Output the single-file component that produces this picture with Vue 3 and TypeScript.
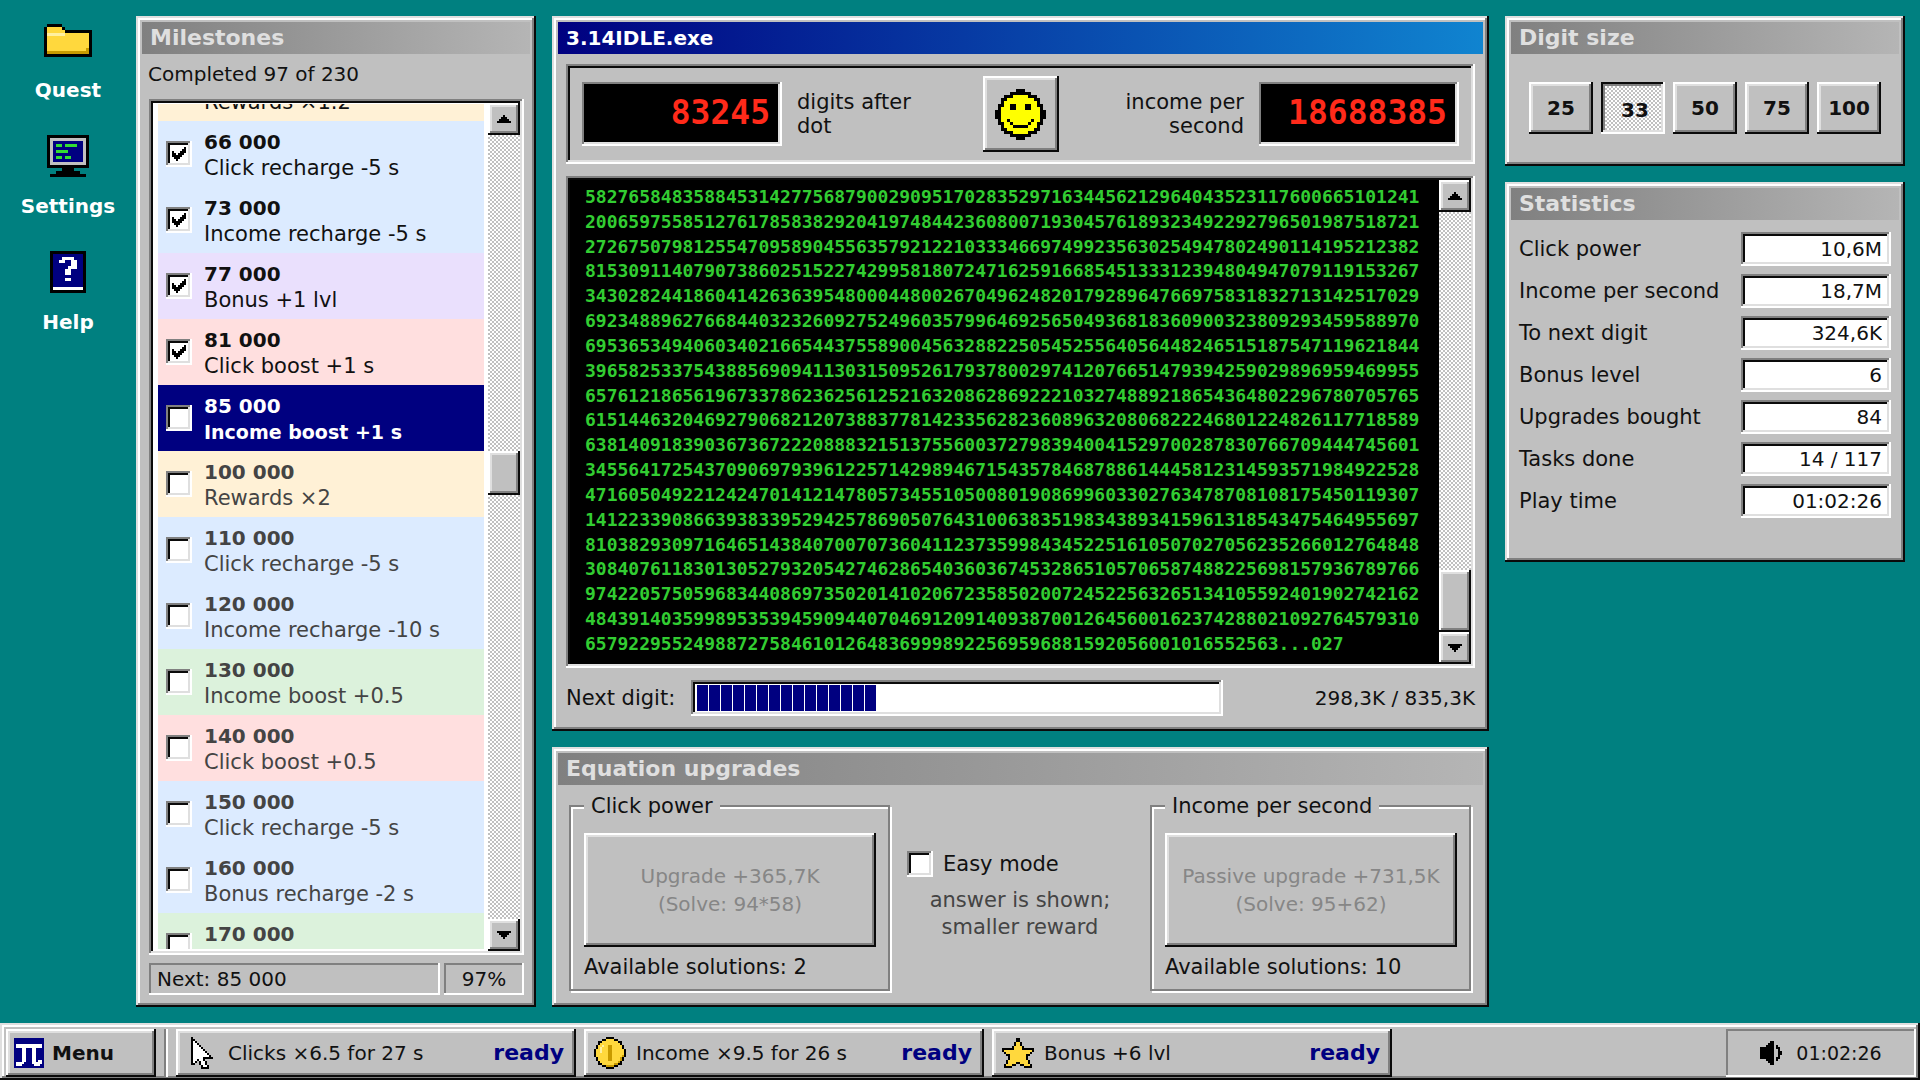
<script setup lang="ts">
import { h, nextTick, onMounted, ref } from 'vue'
import type { FunctionalComponent } from 'vue'

const palette: Record<string, string> = {
  k: '#000000',
  w: '#ffffff',
  y: '#ffd83d',
  l: '#fff0a0',
  d: '#c89a00',
  c: '#c0c0c0',
  n: '#000080',
  g: '#33dd33',
  s: '#ffff00',
}

/* Draws a bitmap icon: one letter of the palette per cell, "." is empty. */
const PixelIcon: FunctionalComponent<{ rows: string[]; scale?: number }> = (props) => {
  const scale = props.scale ?? 3
  const cols = Math.max(...props.rows.map((r) => r.length))
  const cells = props.rows.flatMap((row, y) =>
    [...(row.match(/(.)\1*/g) ?? [])].reduce<{ x: number; out: ReturnType<typeof h>[] }>(
      (acc, run) => {
        if (run[0] !== '.') {
          acc.out.push(h('rect', { x: acc.x, y, width: run.length, height: 1, fill: palette[run[0]] }))
        }
        acc.x += run.length
        return acc
      },
      { x: 0, out: [] },
    ).out,
  )
  return h(
    'svg',
    {
      width: cols * scale,
      height: props.rows.length * scale,
      viewBox: `0 0 ${cols} ${props.rows.length}`,
      'shape-rendering': 'crispEdges',
      'aria-hidden': 'true',
    },
    cells,
  )
}
PixelIcon.props = ['rows', 'scale']

const folder = [
  '.kkkkk..........',
  'kyyyyyk.........',
  'kyyyyyykkkkkkkkk',
  'kllllllyyyyyyyyk',
  'kyyyyyyyyyyyyyyk',
  'kyyyyyyyyyyyyyyk',
  'kyyyyyyyyyyyyyyk',
  'kyyyyyyyyyyyyyyk',
  'kyyyyyyyyyyyyydk',
  'kddddddddddddddk',
  'kkkkkkkkkkkkkkkk',
]
const monitor = [
  'kkkkkkkkkkkkkk',
  'kcccccccccccck',
  'kcnnnnnnnnnnck',
  'kcnggnggggnnck',
  'kcnnnnnnnnnnck',
  'kcnggggnnnnnck',
  'kcnnnnnnnnnnck',
  'kcnggnggnnnnck',
  'kcnnnnnnnnnnck',
  'kcccccccccccck',
  'kkkkkkkkkkkkkk',
  '.....kkkk.....',
  '...kkkkkkkk...',
  '.kkkkkkkkkkkk.',
]
const help = [
  'kkkkkkkkkkkk',
  'knnnnnnnnnnk',
  'knnnwwwwnnnk',
  'knnwwnnwwnnk',
  'knnnnnnwwnnk',
  'knnnnnwwwnnk',
  'knnnnwwnnnnk',
  'knnnnwwnnnnk',
  'knnnnnnnnnnk',
  'knnnnwwnnnnk',
  'knnnnnnnnnnk',
  'knnnnnnnnnnk',
  'kwwwwwwwwwwk',
  'kkkkkkkkkkkk',
]
const smiley = [
  '.......kkk.......',
  '.....kkkkkkk.....',
  '...kkkssssskkk...',
  '..kkssssssssskk..',
  '..ksssssssssssk..',
  '.kksskkssskksskk.',
  '.kssskkssskksssk.',
  'kkssssssssssssskk',
  'kkssssssssssssskk',
  'kkssssssssssssskk',
  '.ksskssssssskssk.',
  '.kkssksssssksskk.',
  '..kssskkkkksssk..',
  '..kkssssssssskk..',
  '...kkkssssskkk...',
  '.....kkkkkkk.....',
  '.......kkk.......',
]
const tick = ['......k', '.....kk', 'k...kkk', 'kk.kkk.', 'kkkkk..', '.kkk...', '..k....']
const arrowUp = ['...k...', '..kkk..', '.kkkkk.', 'kkkkkkk']
const arrowDown = ['kkkkkkk', '.kkkkk.', '..kkk..', '...k...']
const cursor = [
  'k..........',
  'kk.........',
  'kwk........',
  'kwwk.......',
  'kwwwk......',
  'kwwwwk.....',
  'kwwwwwk....',
  'kwwwwwwk...',
  'kwwwwwwwk..',
  'kwwwwwwwwk.',
  'kwwwwwkkkkk',
  'kwwkwwk....',
  'kwk.kwwk...',
  'kk..kwwk...',
  '.....kwwk..',
  '.....kkkk..',
]
const coin = [
  '......kkkk......',
  '....kkyyyykk....',
  '..kkyyyyyyyykk..',
  '..kyyyyyyyyyyk..',
  '.kyylyyddyyyyyk.',
  '.kylyyyddyyyyyk.',
  'kyylyyyddyyyyyyk',
  'kyylyyyddyyyyyyk',
  'kyyyyyyddyyyyyyk',
  'kyyyyyyddyyyyydk',
  '.kyyyyyddyyyydk.',
  '.kyyyyyddyyyydk.',
  '..kyyyyyyyyydk..',
  '..kkyyyyyyddkk..',
  '....kkddddkk....',
  '......kkkk......',
]
const star = [
  '.......kk.......',
  '.......kk.......',
  '......kyyk......',
  '......kyyk......',
  '.....kyyyyk.....',
  'kkkkkkyyyykkkkkk',
  'kyyyyyyyyyyyyyyk',
  '.kyyyyyyyyyyyyk.',
  '..kkyyyyyyyykk..',
  '...kyyyyyyyyk...',
  '...kyyyyyyyyk...',
  '..kyyyyyyyyyyk..',
  '..kyyyykkyyyyk..',
  '.kyyykk..kkyyyk.',
  '.kkkk......kkkk.',
]
const speaker = [
  '.....kk....',
  '....kkk....',
  '...kkkk.k..',
  'kkkkkkk.kk.',
  'kkkkkkk..k.',
  'kkkkkkk..kk',
  'kkkkkkk..kk',
  'kkkkkkk..k.',
  'kkkkkkk.kk.',
  '...kkkk.k..',
  '....kkk....',
  '.....kk....',
]
const pi = [
  'nnnnnnnnnnnnnnn',
  'nnnnnnnnnnnnnnn',
  'nnnnnnnnnnnnnnn',
  'nwwwwwwwwwwwwwn',
  'nwwwwwwwwwwwwwn',
  'nnnnwwnnnwwnnnn',
  'nnnnwwnnnwwnnnn',
  'nnnnwwnnnwwnnnn',
  'nnnnwwnnnwwnnnn',
  'nnnnwwnnnwwnnnn',
  'nnnnwwnnnwwnnnn',
  'nnnnwwnnnwwnwwn',
  'nwwwwnnnnwwwwwn',
  'nwwwnnnnnnwwwnn',
  'nnnnnnnnnnnnnnn',
]

const shortcuts = [
  { label: 'Quest', icon: folder },
  { label: 'Settings', icon: monitor },
  { label: 'Help', icon: help },
]

interface Milestone {
  at: string
  reward: string
  tone: string
  state: 'done' | 'next' | 'locked'
}
const milestones: Milestone[] = [
  { at: '', reward: 'Rewards ×1.2', tone: 'amber', state: 'done' },
  { at: '66 000', reward: 'Click recharge -5 s', tone: 'blue', state: 'done' },
  { at: '73 000', reward: 'Income recharge -5 s', tone: 'blue', state: 'done' },
  { at: '77 000', reward: 'Bonus +1 lvl', tone: 'violet', state: 'done' },
  { at: '81 000', reward: 'Click boost +1 s', tone: 'red', state: 'done' },
  { at: '85 000', reward: 'Income boost +1 s', tone: 'navy', state: 'next' },
  { at: '100 000', reward: 'Rewards ×2', tone: 'amber', state: 'locked' },
  { at: '110 000', reward: 'Click recharge -5 s', tone: 'blue', state: 'locked' },
  { at: '120 000', reward: 'Income recharge -10 s', tone: 'blue', state: 'locked' },
  { at: '130 000', reward: 'Income boost +0.5', tone: 'green', state: 'locked' },
  { at: '140 000', reward: 'Click boost +0.5', tone: 'red', state: 'locked' },
  { at: '150 000', reward: 'Click recharge -5 s', tone: 'blue', state: 'locked' },
  { at: '160 000', reward: 'Bonus recharge -2 s', tone: 'blue', state: 'locked' },
  { at: '170 000', reward: '', tone: 'green', state: 'locked' },
]

const digitRows = [
  '58276584835884531427756879002909517028352971634456212964043523117600665101241',
  '20065975585127617858382920419748442360800719304576189323492292796501987518721',
  '27267507981255470958904556357921221033346697499235630254947802490114195212382',
  '81530911407907386025152274299581807247162591668545133312394804947079119153267',
  '34302824418604142636395480004480026704962482017928964766975831832713142517029',
  '69234889627668440323260927524960357996469256504936818360900323809293459588970',
  '69536534940603402166544375589004563288225054525564056448246515187547119621844',
  '39658253375438856909411303150952617937800297412076651479394259029896959469955',
  '65761218656196733786236256125216320862869222103274889218654364802296780705765',
  '61514463204692790682120738837781423356282360896320806822246801224826117718589',
  '63814091839036736722208883215137556003727983940041529700287830766709444745601',
  '34556417254370906979396122571429894671543578468788614445812314593571984922528',
  '47160504922124247014121478057345510500801908699603302763478708108175450119307',
  '14122339086639383395294257869050764310063835198343893415961318543475464955697',
  '81038293097164651438407007073604112373599843452251610507027056235266012764848',
  '30840761183013052793205427462865403603674532865105706587488225698157936789766',
  '97422057505968344086973502014102067235850200724522563265134105592401902742162',
  '48439140359989535394590944070469120914093870012645600162374288021092764579310',
  '6579229552498872758461012648369998922569596881592056001016552563...027',
]

const sizes = [25, 33, 50, 75, 100]
const activeSize = ref(33)
const easyMode = ref(false)

const stats = [
  { id: 'click', label: 'Click power', value: '10,6M' },
  { id: 'income', label: 'Income per second', value: '18,7M' },
  { id: 'next', label: 'To next digit', value: '324,6K' },
  { id: 'bonus', label: 'Bonus level', value: '6' },
  { id: 'upgrades', label: 'Upgrades bought', value: '84' },
  { id: 'tasks', label: 'Tasks done', value: '14 / 117' },
  { id: 'time', label: 'Play time', value: '01:02:26' },
]

const boosts = [
  { label: 'Clicks ×6.5 for 27 s', icon: cursor },
  { label: 'Income ×9.5 for 26 s', icon: coin },
  { label: 'Bonus +6 lvl', icon: star },
]

const list = ref<HTMLElement | null>(null)
onMounted(async () => {
  await nextTick()
  if (list.value) list.value.scrollTop = 49
})
</script>

<template>
  <div class="desktop">
    <main class="screen">
      <nav class="shortcuts">
        <button v-for="s in shortcuts" :key="s.label" type="button" class="shortcut">
          <span class="shortcut-icon"><PixelIcon :rows="s.icon" /></span>
          <span>{{ s.label }}</span>
        </button>
      </nav>

      <section class="window milestones">
        <h2 class="title">Milestones</h2>
        <p class="completed">Completed 97 of 230</p>
        <div class="list-box sunken">
          <ul ref="list" class="list">
            <li v-for="m in milestones" :key="m.at" :class="['row', m.tone, m.state]">
              <label class="row-label">
                <span class="check">
                  <input type="checkbox" :checked="m.state === 'done'" />
                  <PixelIcon v-if="m.state === 'done'" class="tick" :rows="tick" :scale="2" />
                </span>
                <span class="row-text">
                  <b>{{ m.at }}</b>
                  <span>{{ m.reward }}</span>
                </span>
              </label>
            </li>
          </ul>
          <div class="scrollbar">
            <button type="button" class="scroll-btn" aria-label="Scroll up"><PixelIcon :rows="arrowUp" :scale="2" /></button>
            <div class="track-before"></div>
            <div class="thumb"></div>
            <div class="track-after"></div>
            <button type="button" class="scroll-btn" aria-label="Scroll down"><PixelIcon :rows="arrowDown" :scale="2" /></button>
          </div>
        </div>
        <footer class="status">
          <span class="status-field">Next: 85 000</span>
          <span class="status-field percent">97%</span>
        </footer>
      </section>

      <div class="center">
        <section class="window game">
          <h1 class="title active">3.14IDLE.exe</h1>
          <div class="panel sunken">
            <output class="led">83245</output>
            <span class="led-label">digits after dot</span>
            <button type="button" class="face" aria-label="Click"><PixelIcon :rows="smiley" /></button>
            <span class="led-label right">income per second</span>
            <output class="led">18688385</output>
          </div>
          <div class="digits-box sunken">
            <div class="digits">
              <div v-for="(row, i) in digitRows" :key="i">{{ row }}</div>
            </div>
            <div class="scrollbar">
              <button type="button" class="scroll-btn" aria-label="Scroll up"><PixelIcon :rows="arrowUp" :scale="2" /></button>
              <div class="track-after"></div>
              <div class="thumb large"></div>
              <button type="button" class="scroll-btn" aria-label="Scroll down"><PixelIcon :rows="arrowDown" :scale="2" /></button>
            </div>
          </div>
          <div class="progress-row">
            <span>Next digit:</span>
            <div class="progress sunken" role="progressbar" aria-valuenow="298" aria-valuemin="0" aria-valuemax="835">
              <i v-for="n in 15" :key="n" class="segment"></i>
            </div>
            <span class="progress-value">298,3K / 835,3K</span>
          </div>
        </section>

        <section class="window upgrades">
          <h2 class="title">Equation upgrades</h2>
          <div class="upgrade-row">
            <fieldset class="group">
              <legend>Click power</legend>
              <button type="button" class="upgrade" disabled>Upgrade +365,7K<br />(Solve: 94*58)</button>
              <p class="available">Available solutions: 2</p>
            </fieldset>
            <div class="easy">
              <label class="easy-label">
                <span class="check"><input v-model="easyMode" type="checkbox" /></span>
                Easy mode
              </label>
              <p class="hint">answer is shown;<br />smaller reward</p>
            </div>
            <fieldset class="group">
              <legend>Income per second</legend>
              <button type="button" class="upgrade" disabled>Passive upgrade +731,5K<br />(Solve: 95+62)</button>
              <p class="available">Available solutions: 10</p>
            </fieldset>
          </div>
        </section>
      </div>

      <div class="side">
        <section class="window sizes-window">
          <h2 class="title">Digit size</h2>
          <div class="sizes">
            <button
              v-for="s in sizes"
              :key="s"
              type="button"
              :class="['size', { pressed: s === activeSize }]"
              @click="activeSize = s"
            >{{ s }}</button>
          </div>
        </section>
        <section class="window stats-window">
          <h2 class="title">Statistics</h2>
          <div class="stats">
            <div v-for="s in stats" :key="s.id" class="stat">
              <label :for="s.id">{{ s.label }}</label>
              <input :id="s.id" type="text" class="sunken" readonly :value="s.value" />
            </div>
          </div>
        </section>
      </div>
    </main>

    <footer class="taskbar">
      <button type="button" class="menu"><PixelIcon :rows="pi" :scale="2" />Menu</button>
      <span class="divider"></span>
      <button v-for="b in boosts" :key="b.label" type="button" class="boost">
        <span class="boost-icon"><PixelIcon :rows="b.icon" :scale="2" /></span>
        <span class="boost-name">{{ b.label }}</span>
        <b class="ready">ready</b>
      </button>
      <div class="tray">
        <PixelIcon :rows="speaker" :scale="2" />
        <time>01:02:26</time>
      </div>
    </footer>
  </div>
</template>

<style>
body {
  margin: 0;
  background: #008080;
}
</style>

<style scoped>
.desktop {
  display: flex;
  flex-direction: column;
  height: 100vh;
  background: #008080;
  color: #111;
  font: 21px/24px "DejaVu Sans", sans-serif;
}
.desktop * {
  box-sizing: border-box;
}
button,
input {
  margin: 0;
  padding: 0;
  border: 0;
  border-radius: 0;
  font: inherit;
  font-size: 20px;
  color: inherit;
}
b {
  font-size: 20px;
}
h1,
h2,
p,
ul {
  margin: 0;
  padding: 0;
}
svg {
  display: block;
  flex: none;
}

.screen {
  flex: 1;
  min-height: 0;
  display: grid;
  grid-template-columns: 136px 400px 1fr 416px;
  padding: 16px 15px 16px 0;
}
.center,
.side {
  display: flex;
  flex-direction: column;
  gap: 16px;
  min-width: 0;
  min-height: 0;
  margin-left: 16px;
}

/* Bevels */
.window,
.taskbar {
  background: #c0c0c0;
  box-shadow:
    inset -2px -2px #0a0a0a,
    inset 2px 2px #dfdfdf,
    inset -4px -4px #808080,
    inset 4px 4px #fff;
}
.sunken,
.check input {
  box-shadow:
    inset -2px -2px #fff,
    inset 2px 2px #808080,
    inset -4px -4px #dfdfdf,
    inset 4px 4px #0a0a0a;
}
.scroll-btn,
.thumb,
.face,
.upgrade,
.size,
.menu,
.boost {
  background: #c0c0c0;
  box-shadow:
    inset -2px -2px #0a0a0a,
    inset 2px 2px #fff,
    inset -4px -4px #808080,
    inset 4px 4px #dfdfdf;
}

.window {
  display: flex;
  flex-direction: column;
  padding: 6px;
}
.title {
  flex: none;
  height: 32px;
  padding: 0 8px;
  background: linear-gradient(90deg, #808080, #b5b5b5);
  color: #dfdfdf;
  font-size: 22px;
  line-height: 32px;
  font-weight: bold;
}
.title.active {
  background: linear-gradient(90deg, #000080, #1084d0);
  color: #fff;
  font-size: 20px;
}

/* Shortcuts */
.shortcuts {
  display: flex;
  flex-direction: column;
  gap: 26px;
}
.shortcut {
  display: flex;
  flex-direction: column;
  align-items: center;
  gap: 14px;
  height: 90px;
  background: none;
  color: #fff;
  font-weight: bold;
}
.shortcut-icon {
  display: grid;
  place-items: center;
  height: 48px;
}

/* Milestones */
.milestones {
  min-height: 0;
}
.completed {
  padding: 8px 6px 13px;
  font-size: 20px;
}
.list-box {
  flex: 1;
  min-height: 0;
  display: flex;
  margin: 0 6px 0 7px;
  padding: 4px 4px 4px 9px;
  background: #fff;
}
.list {
  flex: 1;
  overflow: hidden;
  margin: 1px 4px 2px 0;
  list-style: none;
}
.row {
  height: 66px;
}
.row-label {
  display: flex;
  align-items: center;
  height: 66px;
  padding-left: 8px;
}
.row-text {
  display: flex;
  flex-direction: column;
  gap: 2px;
  margin-left: 12px;
  padding-top: 2px;
}
.row-text > * {
  height: 24px;
}
.amber { background: #fff1d6; }
.blue { background: #dcebff; }
.violet { background: #eae0fd; }
.red { background: #ffdfdf; }
.green { background: #dcf2dc; }
.navy { background: #000080; }
.next {
  color: #fff;
  font-size: 19px;
  font-weight: bold;
}
.locked {
  color: #444;
}
.check {
  position: relative;
  display: block;
  flex: none;
  width: 26px;
  height: 26px;
}
.check input {
  display: block;
  width: 26px;
  height: 26px;
  appearance: none;
  background: #fff;
}
.tick {
  position: absolute;
  left: 6px;
  top: 6px;
}

/* Scrollbars */
.scrollbar {
  flex: none;
  display: flex;
  flex-direction: column;
  width: 32px;
  background: repeating-conic-gradient(#c0c0c0 0 25%, #fff 0 50%) 0 0 / 4px 4px;
}
.scroll-btn {
  flex: none;
  display: grid;
  place-items: center;
  height: 32px;
}
.track-before {
  flex: 316;
}
.track-after {
  flex: 424;
}
.thumb {
  flex: none;
  height: 44px;
}
.thumb.large {
  height: 62px;
}

.status {
  display: flex;
  gap: 4px;
  padding: 8px 6px 6px 7px;
  font-size: 20px;
}
.status-field {
  flex: 1;
  height: 32px;
  padding: 0 8px;
  line-height: 32px;
  box-shadow:
    inset -2px -2px #fff,
    inset 2px 2px #808080;
}
.status-field.percent {
  flex: none;
  width: 80px;
  text-align: center;
}

/* Game window */
.game {
  flex: 1;
  min-height: 0;
}
.panel {
  flex: none;
  display: flex;
  align-items: center;
  height: 100px;
  margin: 10px 8px 12px;
  padding: 0 16px;
}
.led {
  flex: none;
  width: 200px;
  height: 64px;
  padding-right: 12px;
  background: #000;
  color: #ff2a1a;
  font: bold 33px/62px "DejaVu Sans Mono", monospace;
  text-align: right;
  box-shadow:
    inset -2px -2px #fff,
    inset 2px 2px #808080,
    inset -4px -4px #dfdfdf;
}
.led-label {
  width: 144px;
  margin: 0 auto 0 15px;
}
.led-label.right {
  margin: 0 15px 0 auto;
  text-align: right;
}
.face {
  display: grid;
  place-items: center;
  width: 76px;
  height: 76px;
}
.digits-box {
  flex: 1;
  min-height: 0;
  display: flex;
  margin: 0 8px;
  padding: 4px;
  background: #000;
}
.digits {
  flex: 1;
  min-width: 0;
  display: flex;
  flex-direction: column;
  justify-content: space-between;
  overflow: hidden;
  padding: 5px 0 8px 15px;
  color: #32cd32;
  font: bold 18px/24px "DejaVu Sans Mono", monospace;
  white-space: nowrap;
}
.progress-row {
  flex: none;
  display: grid;
  grid-template-columns: 113px 1fr 240px;
  align-items: center;
  gap: 12px;
  margin: 12px 8px 9px;
}
.progress {
  display: flex;
  gap: 1px;
  height: 36px;
  padding: 5px 6px;
  background: #fff;
}
.segment {
  width: 11px;
  background: #000080;
}
.progress-value {
  font-size: 20px;
  text-align: right;
}

/* Upgrades */
.upgrades {
  flex: none;
  height: 260px;
}
.upgrade-row {
  flex: 1;
  display: flex;
  justify-content: space-between;
  padding: 9px 12px 8px 11px;
}
.group {
  width: 321px;
  height: 197px;
  margin: 0;
  padding: 15px 12px 0 13px;
  border: 2px solid #808080;
  box-shadow:
    2px 2px #fff,
    inset 2px 2px #fff;
}
.group legend {
  margin-left: 0;
  padding: 0 7px;
  background: #c0c0c0;
}
.upgrade {
  display: block;
  width: 100%;
  height: 114px;
  color: #868686;
  line-height: 28px;
}
.available {
  padding: 8px 0 0;
}
.easy {
  display: flex;
  flex-direction: column;
  width: 226px;
  padding: 57px 0 0;
}
.easy-label {
  display: flex;
  align-items: center;
  gap: 10px;
}
.hint {
  padding-top: 10px;
  color: #444;
  line-height: 27px;
  text-align: center;
}

/* Side windows */
.sizes-window {
  height: 150px;
}
.sizes {
  display: flex;
  justify-content: center;
  gap: 8px;
  padding-top: 28px;
}
.size {
  width: 64px;
  height: 52px;
  font-weight: bold;
}
.size.pressed {
  padding: 4px 0 0 4px;
  background: repeating-conic-gradient(#c0c0c0 0 25%, #fff 0 50%) 0 0 / 4px 4px;
  box-shadow:
    inset -2px -2px #fff,
    inset 2px 2px #0a0a0a,
    inset -4px -4px #dfdfdf,
    inset 4px 4px #808080;
}
.stats-window {
  height: 380px;
}
.stats {
  display: flex;
  flex-direction: column;
  gap: 8px;
  padding: 12px 8px 0 8px;
}
.stat {
  display: flex;
  align-items: center;
  justify-content: space-between;
}
.stat input {
  width: 150px;
  height: 34px;
  padding: 0 9px;
  background: #fff;
  text-align: right;
}

/* Taskbar */
.taskbar {
  flex: none;
  display: flex;
  gap: 8px;
  height: 57px;
  padding: 6px 4px 3px 6px;
}
.menu {
  display: flex;
  align-items: center;
  gap: 8px;
  width: 150px;
  padding: 0 8px;
  font-weight: bold;
}
.divider {
  width: 4px;
  background: linear-gradient(90deg, #808080 50%, #fff 50%);
}
.boost {
  display: flex;
  align-items: center;
  width: 400px;
  padding: 0 12px 0 10px;
  text-align: left;
}
.boost-icon {
  display: grid;
  place-items: center;
  width: 32px;
  margin-right: 10px;
}
.boost-name {
  flex: 1;
}
.ready {
  color: #000080;
  font-size: 22px;
}
.tray {
  display: flex;
  align-items: center;
  justify-content: center;
  gap: 14px;
  width: 190px;
  margin-left: auto;
  font-size: 19px;
  box-shadow:
    inset -2px -2px #fff,
    inset 2px 2px #808080;
}
</style>
